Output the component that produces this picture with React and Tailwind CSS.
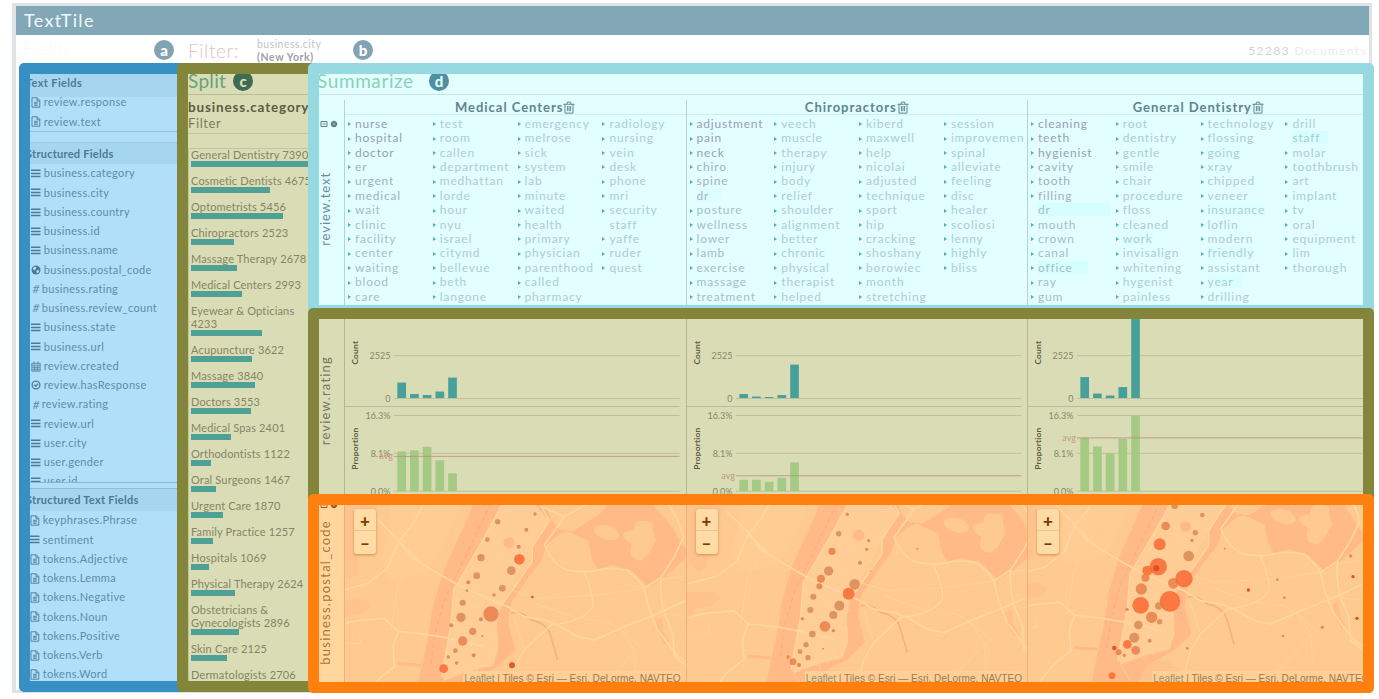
import React from "react";

const S = { strokeLinecap: "round", strokeLinejoin: "round" };

const Doc = () => (
  <svg width="10" height="11" viewBox="0 0 10 11" fill="none" stroke="currentColor" strokeWidth=".9">
    <path d="M1 .8h5.2l2.6 2.7v6.7H1zM6 .8v3h2.8M3 5.3h3.8M3 6.8h3.8M3 8.3h3.8" />
  </svg>
);
const Bars = () => (
  <svg width="10" height="9" viewBox="0 0 10 9" stroke="currentColor" strokeWidth="1.5">
    <path d="M0 1.2h9.5M0 4.4h9.5M0 7.6h9.5" />
  </svg>
);
const Globe = () => (
  <svg width="10" height="10" viewBox="0 0 10 10">
    <circle cx="5" cy="5" r="4.5" fill="currentColor" />
    <path d="M1.8 3.2 4 1.6l1.4.8L4.8 4 3 5.4zM6 5l2.4.4-.9 2.1-1.5.9-.6-1.9z" fill="#b1dff9" />
  </svg>
);
const Cal = () => (
  <svg width="10" height="11" viewBox="0 0 10 11" fill="none" stroke="currentColor">
    <path d="M.8 2.3h8.4v7.9H.8zM.8 4.2h8.4M3 .5v2.6M7 .5v2.6M3.4 4.5v5.5M6.4 4.5v5.5M1 6.3h8M1 8.3h8" strokeWidth=".8" />
  </svg>
);
const Check = () => (
  <svg width="10" height="10" viewBox="0 0 10 10" fill="none" stroke="currentColor" strokeWidth="1.3">
    <circle cx="5" cy="5" r="3.9" />
    <path d="m3.2 4.7 1.6 1.6 2.2-2.6" />
  </svg>
);
const Trash = () => (
  <svg width="12" height="13" viewBox="0 0 11 12" fill="none" stroke="currentColor" strokeWidth=".9" {...S}>
    <path d="M.7 3h9.6M3.5 2.8 4.2 1h2.6l.7 1.8M1.8 3.2v8h7.4v-8M4 5v4M5.5 5v4M7 5v4" />
  </svg>
);
const Tools = () => (
  <svg width="18" height="8" viewBox="0 0 18 8" fill="none" stroke="currentColor" strokeWidth="1">
    <path d="M1 1.5h6v5H1zM2.6 4h3" />
    <circle cx="14" cy="4" r="2.2" strokeWidth="1.8" />
    <path d="M14 .6v6.8M10.6 4h6.8" strokeWidth=".8" />
  </svg>
);

const ICONS = { d: Doc, b: Bars, g: Globe, c: Cal, k: Check };

function Field({ icon, name }) {
  const Icon = ICONS[icon];
  return (
    <li className="flex h-[19.25px] shrink-0 items-center whitespace-nowrap text-[11px] tracking-[0.33px] text-[#5d8da7]">
      {Icon ? (
        <span className="flex w-[12.7px] shrink-0 text-[#4a7b96]"><Icon /></span>
      ) : (
        <span className="w-[10.7px] shrink-0 pl-[1.5px] text-[12px] italic">#</span>
      )}
      {name}
    </li>
  );
}

const TEXT_FIELDS = [["d", "review.response"], ["d", "review.text"]];
const STRUCTURED = [
  ["b", "business.category"], ["b", "business.city"], ["b", "business.country"], ["b", "business.id"],
  ["b", "business.name"], ["g", "business.postal_code"], ["#", "business.rating"], ["#", "business.review_count"],
  ["b", "business.state"], ["b", "business.url"], ["c", "review.created"], ["k", "review.hasResponse"],
  ["#", "review.rating"], ["b", "review.url"], ["b", "user.city"], ["b", "user.gender"], ["b", "user.id"],
];
const TOKENS = [
  ["d", "keyphrases.Phrase"], ["b", "sentiment"], ["d", "tokens.Adjective"], ["d", "tokens.Lemma"],
  ["d", "tokens.Negative"], ["d", "tokens.Noun"], ["d", "tokens.Positive"], ["d", "tokens.Verb"], ["d", "tokens.Word"],
];

const CATEGORIES = [
  ["General Dentistry 7390", 122], ["Cosmetic Dentists 4675", 79], ["Optometrists 5456", 91.5],
  ["Chiropractors 2523", 43], ["Massage Therapy 2678", 45.5], ["Medical Centers 2993", 51],
  ["Eyewear & Opticians\n4233", 71], ["Acupuncture 3622", 61], ["Massage 3840", 64], ["Doctors 3553", 60],
  ["Medical Spas 2401", 40], ["Orthodontists 1122", 19.5], ["Oral Surgeons 1467", 24.5], ["Urgent Care 1870", 31.5],
  ["Family Practice 1257", 21.5], ["Hospitals 1069", 18], ["Physical Therapy 2624", 44],
  ["Obstetricians &\nGynecologists 2896", 48], ["Skin Care 2125", 36], ["Dermatologists 2706", 45.5],
];

const w = (s) => s.split(" ");
const TILES = [
  {
    title: "Medical Centers",
    words: w("nurse hospital doctor er urgent medical wait clinic facility center waiting blood care test room callen department medhattan lorde hour nyu israel citymd bellevue beth langone emergency melrose sick system lab minute waited health primary physician parenthood called pharmacy radiology nursing vein desk phone mri security staff yaffe ruder quest"),
    count: [15.5, 4, 3, 6.5, 20.5],
    prop: [40, 41, 44.5, 31, 18],
    avg: 456.5,
    base: [-102, -45],
    off: [-104, -45],
    dots: [[562,95,8],[531,149,7],[512,203,11],[499,257,10],[474,277,6],[470,302,4],[457,338,9],[452,382,14],[423,406,6],[487,424,11],[457,453,14,1],[516,438,3],[512,388,6],[435,482,7],[414,501,5],[439,519,5],[490,496,6],[400,536,13,2],[605,526,9,3],[542,372,23,1],[551,315,5],[576,295,10],[603,242,13],[627,208,16,2],[666,321,4,3],[625,170,6],[648,119,6],[674,72,5]],
  },
  {
    title: "Chiropractors",
    words: w("adjustment pain neck chiro spine dr posture wellness lower lamb exercise massage treatment veech muscle therapy injury body relief shoulder alignment better chronic physical therapist helped kiberd maxwell help nicolai adjusted technique sport hip cracking shoshany borowiec month stretching session improvement spinal alleviate feeling disc healer scoliosi lenny highly bliss"),
    count: [4, 1.5, 1, 3, 33.5],
    prop: [11.5, 11.5, 9.5, 13.5, 29],
    avg: 476,
    base: [-79, -67.5],
    off: [-20, -45],
    dots: [[501,73,5],[475,131,8],[455,184,11,1],[445,243,14],[422,266,12,1],[417,289,9,1],[399,320,9],[390,360,9],[366,386,5],[523,283,16],[505,311,18,2],[477,347,15],[459,375,12],[434,409,16,1],[459,422,5],[396,432,10],[377,464,8],[359,485,7],[383,503,8],[338,515,10,1],[323,501,5,1],[356,525,6,1],[428,476,3],[565,152,5],[559,178,5],[539,218,6],[571,243,2],[711,176,3]],
  },
  {
    title: "General Dentistry",
    words: w("cleaning teeth hygienist cavity tooth filling dr mouth crown canal office ray gum root dentistry gentle smile chair procedure floss cleaned work invisalign whitening hygenist painless technology flossing going xray chipped veneer insurance loflin modern friendly assistant year drilling drill staff molar toothbrush art implant tv oral equipment lim thorough"),
    count: [21, 4.5, 2.5, 11, 90],
    prop: [53.5, 45, 38, 52.5, 75.5],
    avg: 438,
    base: [-122, -93],
    off: [-25, -45],
    dots: [[465,47,10],[438,108,13,1],[420,163,18,2],[416,230,26,2],[410,235,9,3],[383,242,15,2],[377,263,12,1],[365,297,17,1],[363,346,25,2],[322,358,5],[396,382,17,1],[356,405,13],[420,395,8],[417,348,11],[344,443,15],[323,463,13,2],[348,481,13,1],[284,474,7,3],[297,487,9,1],[314,496,5],[277,557,10,2],[390,452,6],[503,475,4],[451,334,31,2],[461,280,16,1],[493,266,26,2],[507,198,16],[517,151,5],[527,128,8],[548,75,7],[615,176,3],[773,269,4],[686,300,5,3],[794,323,4],[993,198,5],[1000,260,5,3],[1012,385,5,3],[908,412,5],[790,438,4]],
  },
];

const HIGHLIGHT = {
  "1-dr": "bg-[#dbfeff] w-[24px]", "2-dr": "bg-[#d6feff] w-[73px]", "2-office": "bg-[#d4feff] w-[50px]",
  "2-staff": "bg-[#d6feff] w-[36px]", "2-year": "bg-[#dbfeff] w-[34px]", "2-work": "bg-[#ddfeff]",
  "2-going": "bg-[#ddfeff]", "2-insurance": "bg-[#ddfeff]", "2-friendly": "bg-[#ddfeff]",
};

function wordColor(i) {
  if (i < 3) return "text-[#979fb3]";
  if (i < 6) return "text-[#a0b2be]";
  if (i < 13) return "text-[#a3c0c8]";
  return "text-[#aacdd4]";
}

function WordTile({ tile, index }) {
  return (
    <section className="flex h-[205px] w-[341.5px] shrink-0 flex-col border-l border-[#b3d3d6]">
      <h3 className="flex h-[15.5px] items-center justify-center whitespace-nowrap border-b border-[#cdeef0] pt-[2px] text-[13px] font-bold tracking-[0.97px] text-[#5f858e]">
        {tile.title}<Trash />
      </h3>
      <ul className="mt-[1px] grid grid-flow-col auto-cols-[84.8px] grid-rows-[repeat(13,14.42px)] pl-[3px]">
        {tile.words.map((word, i) => (
          <li key={word} className="flex items-center whitespace-nowrap leading-[14px]">
            <span
              className={
                (word === "dr" || word === "staff" ? "border-transparent" : "border-l-[#4fb0b2]") +
                " mr-[4px] mt-[2px] h-0 w-0 shrink-0 border-y-[2.5px] border-l-[3px] border-y-transparent"
              }
            />
            <span className={`${wordColor(i)} ${HIGHLIGHT[index + "-" + word] || ""} block max-w-[73px] overflow-x-clip text-[12px] leading-[13px] tracking-[0.8px]`}>
              {word}
            </span>
          </li>
        ))}
      </ul>
    </section>
  );
}

/* Counts on top, proportions below; the drawing's y axis starts at 319. */
function RatingChart({ tile, last }) {
  const y = (v) => v - 319;
  const right = last ? 337 : 335.5;
  const label = (text, yy) => (
    <text x="45.5" y={y(yy) + 3.5} textAnchor="end" fontSize="9" fill="#85886a">{text}</text>
  );
  return (
    <svg width="341.5" height="175" viewBox="0 0 341.5 175" className="shrink-0 border-l border-[#b4b791]">
      {[355.5, 398.5, 415.5, 453.5, 491.5].map((v) => (
        <line key={v} x1="49" x2={right} y1={y(v)} y2={y(v)} stroke="#bfc19d" />
      ))}
      <line x1="0" x2={right} y1={y(406.5)} y2={y(406.5)} stroke="#b9bb96" />
      {tile.count.map((h, i) => (
        <rect key={i} x={52.5 + i * 12.75} y={y(398) - h} width="8.7" height={h} fill="#48a09b" />
      ))}
      {tile.prop.map((h, i) => (
        <rect key={i} x={52.5 + i * 12.75} y={y(491.5) - h} width="8.7" height={h} fill="#a4ca83" />
      ))}
      <line x1="49" x2={right} y1={y(tile.avg)} y2={y(tile.avg)} stroke="#b88f77" strokeOpacity=".8" />
      {label("2525", 355.5)}
      {label("0", 398.5)}
      {label("16.3%", 415.5)}
      {label("8.1%", 453.5)}
      {label("0.0%", 491.5)}
      <text x="48" y={y(tile.avg) + 3} textAnchor="end" fontSize="9" fill="#c49c86">avg</text>
      <text transform="translate(13 45.5) rotate(-90)" fontSize="8.4" fontWeight="700" letterSpacing=".25" fill="#585b3c">Count</text>
      <text transform="translate(13 151) rotate(-90)" fontSize="8.4" fontWeight="700" letterSpacing=".2" fill="#585b3c">Proportion</text>
    </svg>
  );
}

const DOT_FILL = ["#d88c58", "#e9824c", "#fb6c38", "#dc4a1a"];

function MapBase() {
  return (
    <g>
      <path d="M70 20h140l-20 60-40 20-10 60 0 90-25 20-30-30zM70 330l90-2 20 18-25 22-50 10-35 60zM540 560l80 60H330l10-30 30-20z" fill="#ffc18d" opacity=".7" />
      <path d="M230 0h240l-60 140-60 110-120 20-20-70 30-90z" fill="#ffcf98" opacity=".5" />
      <path d="M500 0H600L520 142 472 225 428 300 420 400 404 480 392 545 400 570 470 545 545 527 562 480 558 400 572 345 615 290 664 215 664 170 712 92 650 45 640 0H1080L1128 90V200L1060 262 1012 292 965 245 905 226 860 238 842 205 832 152 770 124 748 130 706 165 690 215 650 265 600 340 592 400 612 480 560 530 480 572 440 640H310L330 540 350 450 365 350 395 250 440 150 480 60Z" fill="#ffba87" />
      <path d="M650 20 715 92 665 170 570 345 558 400 562 480 545 527 470 545 400 572 390 545 420 400 428 300 520 142 590 20Z" fill="#ffcd95" />
      <path d="M640 20H900q-20 50-55 66-35 22-60 38l-40-6-26-30-10-32zM850 112q30-14 56 0 26 18 16 34-26 10-50-2-26-10-22-32zM935 132q20-14 32-10 4-26 16-28 30-4 42 6 2 40 10 50-10 20-24 44l-22 18q-30-6-30-20-2-20 4-30-24-10-28-30zM1030 20h100v160q-30-30-40-60-30-40-60-70z" fill="#ffca90" />
      <path d="M578 150q16-14 28-4 12 12-2 26-18 6-26-8z" fill="#ffba87" />
      <path d="M1035 390l18-6 4 40 18 30-14 10-22-40z" fill="#ffbf8a" />
      <path d="M540 40 400 330 372 430 358 530" fill="none" stroke="#f0a67a" strokeWidth="2" strokeDasharray="14 10" />
      <path d="M600 370q30-10 60 20 50 10 60 50l20 70" fill="none" stroke="#f6b081" strokeWidth="5" />
      <path d="M260 520l70 6" stroke="#ffba87" strokeWidth="8" />
      <g fill="none" stroke="#ffd7a0" strokeWidth="5" {...S}>
        <path d="M200 88 262 150 300 200 380 250 450 290 590 350 640 380 700 390 740 405 800 440 850 450 940 410 1030 375 1128 330" />
        <path d="M340 40 300 110 262 155 230 235 170 280 60 310M262 155 320 210" />
        <path d="M60 410 140 392 220 385 262 424 340 432 420 446 520 470M262 424 246 470 250 530 200 570 160 620" />
        <path d="M575 40 520 142 472 225 428 300 420 400 404 500 392 560M690 50 716 92 664 170 664 215 572 345" strokeWidth="4" />
        <path d="M690 50 760 80 830 40M760 80 700 165 Q730 235 780 242T860 240 950 240Q985 270 1000 295L1050 262 1090 200 1118 140 1100 90 1060 20" />
        <path d="M820 250Q850 320 845 350 820 395 720 405L640 480 610 530 590 600" strokeWidth="4" />
        <path d="M1000 295 1012 350 1040 420 1070 460 1100 500 1128 515M1050 262Q1046 320 1060 370L1085 430 1090 500 1128 530" />
        <path d="M1050 268 1128 258M600 300 680 325 860 315 1000 295M670 340 800 385 890 395 930 420 970 480 975 560M610 385 640 480M930 420 1000 480M1060 370 1128 380" strokeWidth="2" />
        <path d="M535 100 660 170M480 225 570 280M510 150 640 240M430 320 570 385M420 400 560 440M470 440 500 545M545 390 560 450 545 520 440 545 400 570M440 460 480 560" strokeWidth="2" />
        <path d="M240 420 260 290 290 230 340 150M140 420 150 460 60 460M975 480 900 560 860 600M400 575 430 620" strokeWidth="2" />
      </g>
    </g>
  );
}

function MapTile({ tile, last }) {
  return (
    <div className="relative h-[177px] w-[341.5px] shrink-0 overflow-hidden border-l border-[#f1ae76]">
      <svg width="342" height="177" viewBox="0 0 1026 531" className="block bg-[#ffca90]">
        <g transform={`translate(${tile.base[0]} ${tile.base[1]})`}><MapBase /></g>
        <g transform={`translate(${tile.off[0]} ${tile.off[1]})`}>
          {tile.dots.map(([x, y, r, k = 0], i) => (
            <circle key={i} cx={x} cy={y} r={r} fill={DOT_FILL[k]} fillOpacity={r < 7 ? 0.95 : 0.88} />
          ))}
        </g>
      </svg>
      <div className="absolute left-[9px] top-[4px] flex h-[45px] w-[22px] flex-col rounded-[3px] bg-[#ffdba6] text-center text-[17px] font-black leading-[23px] text-[#7d3d00] shadow-[0_1px_3px_rgba(190,95,20,0.6)]">
        <span className="h-[22px] border-b border-[#f2c48c]">+</span>
        <span className="h-[22px]">–</span>
      </div>
      <p className={`absolute -bottom-[5px] ${last ? "-right-[1px]" : "right-[5px]"} h-[16px] whitespace-nowrap bg-[#ffcf98] pl-[1px] font-['Liberation_Sans',sans-serif] text-[10.1px] leading-[16px] text-[#a1784d]`}>
        <span className="text-[#97916a]">Leaflet</span> | Tiles © Esri — Esri, DeLorme, NAVTEQ
      </p>
    </div>
  );
}

function SideLabel({ children, className }) {
  return (
    <div className={`flex shrink-0 items-center justify-center ${className}`}>
      <span className="rotate-180 whitespace-nowrap [writing-mode:vertical-rl]">{children}</span>
    </div>
  );
}

function Badge({ children, className }) {
  return (
    <span className={`flex h-[20px] w-[20px] shrink-0 items-center justify-center rounded-full text-[15px] font-black leading-[16px] tracking-normal ${className}`}>
      {children}
    </span>
  );
}

export default function App() {
  return (
    <div className="h-[699px] w-[1379px] overflow-hidden bg-white pl-[12px] pt-[3px] font-['Lato',sans-serif]">
      <div className="h-[690px] w-[1360px] border-[3px] border-l-[4px] border-[#dfe3e6]">
        <header className="flex h-[29px] items-center bg-[#82a8b8] pl-[8px] text-[18px] tracking-[1.3px] text-[#f0f8fb]">
          TextTile
        </header>
        <div className="flex h-[28px] items-center">
          <span className="w-[138px] pl-[7px] text-[17px] font-light tracking-[1px] text-[#fafafa]">Fields</span>
          <Badge className="mt-[2px] bg-[#82a3b1] text-white">a</Badge>
          <span className="ml-[14px] mt-[4px] w-[69px] text-[19px] font-light tracking-[0.6px] text-[#d8c3d0]">Filter:</span>
          <div className="mt-[3px] w-[96px] whitespace-nowrap text-[10.5px] leading-[13px]">
            <div className="tracking-[0.45px] text-[#c3c3c5]">business.city</div>
            <div className="font-bold tracking-[0.6px] text-[#a0a0a6]">(New York)</div>
          </div>
          <Badge className="mt-[2px] bg-[#82a3b1] text-white">b</Badge>
          <span className="ml-auto mt-[4px] whitespace-nowrap pr-[2px] text-[12px] tracking-[1.35px] text-[#d2d2d2]">
            52283 <span className="text-[#ececec]">Documents</span>
          </span>
        </div>

        <main className="-mr-[6px] ml-[3px] flex h-[629px] w-[1355px]">
          <aside className="flex w-[169px] shrink-0 flex-col overflow-hidden rounded-[5px] border-[11px] border-[#3790c3] bg-[#b1dff9]">
            <h2 className="-ml-[4px] flex h-[23px] shrink-0 items-center bg-[#a6d5f0] pb-[5px] text-[11px] font-bold tracking-[0.35px] text-[#4a7a95]">Text Fields</h2>
            <ul className="-mt-[4px] h-[39px] shrink-0 border-b border-[#92bfd9] pl-[1px]">
              {TEXT_FIELDS.map(([i, n]) => <Field key={n} icon={i} name={n} />)}
            </ul>
            <h2 className="-ml-[4px] mt-[10px] flex h-[22px] shrink-0 items-center border-t border-[#9bcae4] bg-[#a6d5f0] pt-[1px] text-[11px] font-bold tracking-[0.25px] text-[#4a7a95]">Structured Fields</h2>
            <ul className="h-[319px] shrink-0 overflow-hidden border-b border-[#88b6d0] pl-[1px]">
              {STRUCTURED.map(([i, n]) => <Field key={n} icon={i} name={n} />)}
            </ul>
            <h2 className="-ml-[4px] mt-[5px] flex h-[23px] shrink-0 items-center border-t border-[#8fbdd7] bg-[#a6d5f0] text-[11px] font-bold tracking-[0.28px] text-[#4a7a95]">Structured Text Fields</h2>
            <ul className="shrink-0">
              {TOKENS.map(([i, n]) => <Field key={n} icon={i} name={n} />)}
            </ul>
          </aside>

          <section className="relative -ml-[11px] flex w-[142px] shrink-0 flex-col overflow-hidden rounded-[5px] border-[11px] border-[#83863a] bg-[#dadcb5]">
            <h2 className="-mt-[5px] flex h-[25.5px] shrink-0 items-center border-b border-[#bcbe99] text-[19px] tracking-[0.3px] text-[#63a480]">
              Split<Badge className="ml-[7px] bg-[#3f6b55] text-[#dadcb5]">c</Badge>
            </h2>
            <div className="h-[39px] shrink-0 whitespace-nowrap border-b border-[#c3c5a0] pt-[4px] leading-[16px] text-[#5b5d42]">
              <div className="text-[13.5px] font-bold tracking-[0.85px]">business.category</div>
              <div className="text-[13px] tracking-[0.6px] text-[#7b7d60]">Filter</div>
            </div>
            <ul className="mt-[14px] h-full border-l border-t border-[#c3c5a0] pl-[2px]">
              {CATEGORIES.map(([name, width]) => (
                <li key={name} className="mb-[6.5px] -translate-y-px">
                  <div className="whitespace-pre text-[11px] leading-[13px] tracking-[0.17px] text-[#838566]">{name}</div>
                  <div className="h-[6.5px] bg-[#4fa095]" style={{ width }} />
                </li>
              ))}
            </ul>
          </section>

          <div className="relative -ml-[11px] flex h-[630px] w-[1066px] shrink-0 flex-col">
            <section className="h-[250px] shrink-0 overflow-hidden rounded-t-[5px] border-[11px] border-b-[8px] border-[#97d9e1] bg-[#e2feff]">
              <h2 className="-mt-[5px] flex h-[25.5px] items-center border-b border-[#c6e8ea] text-[19px] tracking-[0.6px] text-[#8ad2b5]">
                <span className="-ml-[2px] w-[112px]">Summarize</span>
                <Badge className="bg-[#4f8fa1] text-[#e2feff]">d</Badge>
              </h2>
              <div className="mt-[5px] flex">
                <div className="relative flex w-[25px] shrink-0">
                  <span className="absolute left-[1px] top-[20.5px] text-[#5c7c82]"><Tools /></span>
                  <SideLabel className="w-[13px] pt-[14px] text-[13px] tracking-[0.95px] text-[#6b8e94]">review.text</SideLabel>
                </div>
                {TILES.map((t, i) => <WordTile key={t.title} tile={t} index={i} />)}
              </div>
            </section>

            <section className="-mt-[5px] flex h-[197px] shrink-0 overflow-hidden rounded-[5px] border-[11px] border-[#83863a] bg-[#dadcb5]">
              <div className="flex w-[25px] shrink-0">
                <SideLabel className="w-[14px] pb-[12px] text-[13px] tracking-[1.2px] text-[#74775a]">review.rating</SideLabel>
              </div>
              {TILES.map((t, i) => <RatingChart key={t.title} tile={t} last={i === 2} />)}
            </section>

            <section className="-mt-[11px] flex h-[199px] shrink-0 overflow-hidden rounded-[5px] border-[11px] border-[#ff7f0f] bg-[#ffd79e]">
              <div className="relative flex w-[25px] shrink-0">
                <span className="absolute -top-[4px] left-[1px] text-[#a65a1a]"><Tools /></span>
                <SideLabel className="w-[13px] pb-[3px] text-[13px] tracking-[1.25px] text-[#ae7236]">business.postal_code</SideLabel>
              </div>
              {TILES.map((t, i) => <MapTile key={t.title} tile={t} last={i === 2} />)}
            </section>
          </div>
        </main>
      </div>
    </div>
  );
}
